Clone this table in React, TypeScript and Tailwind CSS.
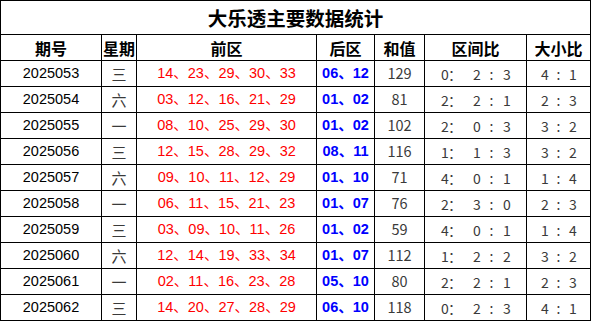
const rows = [
  { no: '2025053', day: '三', front: '14、23、29、30、33', back: '06、12', sum: '129', zone: ['0', '2', '3'], size: ['4', '1'] },
  { no: '2025054', day: '六', front: '03、12、16、21、29', back: '01、02', sum: '81', zone: ['2', '2', '1'], size: ['2', '3'] },
  { no: '2025055', day: '一', front: '08、10、25、29、30', back: '01、02', sum: '102', zone: ['2', '0', '3'], size: ['3', '2'] },
  { no: '2025056', day: '三', front: '12、15、28、29、32', back: '08、11', sum: '116', zone: ['1', '1', '3'], size: ['3', '2'] },
  { no: '2025057', day: '六', front: '09、10、11、12、29', back: '01、10', sum: '71', zone: ['4', '0', '1'], size: ['1', '4'] },
  { no: '2025058', day: '一', front: '06、11、15、21、23', back: '01、07', sum: '76', zone: ['2', '3', '0'], size: ['2', '3'] },
  { no: '2025059', day: '三', front: '03、09、10、11、26', back: '01、02', sum: '59', zone: ['4', '0', '1'], size: ['1', '4'] },
  { no: '2025060', day: '六', front: '12、14、19、33、34', back: '01、07', sum: '112', zone: ['1', '2', '2'], size: ['3', '2'] },
  { no: '2025061', day: '一', front: '02、11、16、23、28', back: '05、10', sum: '80', zone: ['2', '2', '1'], size: ['2', '3'] },
  { no: '2025062', day: '三', front: '14、20、27、28、29', back: '06、10', sum: '118', zone: ['0', '2', '3'], size: ['4', '1'] },
]

const heads = ['期号', '星期', '前区', '后区', '和值', '区间比', '大小比']

const num = "font-['Liberation_Sans','Noto_Sans_CJK_SC',sans-serif] text-[14.5px]"
const thin = "font-['Noto_Sans_CJK_SC',sans-serif] font-normal text-[#3a3a3a]"

function Ch({ c }: { c: string }) {
  return <span className="inline-block w-[7px] text-center">{c}</span>
}

function Zone({ p }: { p: string[] }) {
  return (
    <div className={`flex items-center justify-center text-[14px] ${thin}`}>
      <Ch c={p[0]} />
      <span className="inline-block w-[14px] text-left">：</span>
      <span className="ml-[11px]"><Ch c={p[1]} /></span>
      <span className="ml-[8px]"><Ch c=":" /></span>
      <span className="ml-[8px]"><Ch c={p[2]} /></span>
    </div>
  )
}

function Size({ p }: { p: string[] }) {
  return (
    <div className={`flex items-center justify-center text-[14px] ${thin}`}>
      <Ch c={p[0]} />
      <span className="ml-[7px]"><Ch c=":" /></span>
      <span className="ml-[7px]"><Ch c={p[1]} /></span>
    </div>
  )
}

export default function App() {
  return (
    <div className="w-[591px] h-[321px] bg-white overflow-hidden">
      <table className="w-[590px] table-fixed border-collapse text-black">
        <colgroup>
          <col className="w-[101px]" />
          <col className="w-[35px]" />
          <col className="w-[180px]" />
          <col className="w-[58px]" />
          <col className="w-[50px]" />
          <col className="w-[102px]" />
          <col className="w-[64px]" />
        </colgroup>
        <tbody>
          <tr className="h-[34px]">
            <td colSpan={7} className="border border-black text-center p-0 font-['Noto_Sans_CJK_SC',sans-serif] font-bold text-[19.5px] leading-none">
              大乐透主要数据统计
            </td>
          </tr>
          <tr className="h-[26px]">
            {heads.map((h) => (
              <td key={h} className="border border-black text-center p-0 font-['Noto_Sans_CJK_SC',sans-serif] font-bold text-[16px] leading-none">
                {h}
              </td>
            ))}
          </tr>
          {rows.map((r) => (
            <tr key={r.no} className="h-[26px]">
              <td className={`border border-black text-center p-0 leading-none ${num}`}>{r.no}</td>
              <td className={`border border-black text-center p-0 leading-none text-[15px] ${thin}`}>{r.day}</td>
              <td className={`border border-black text-center p-0 leading-none text-[#ff0000] ${num}`}>{r.front}</td>
              <td className={`border border-black text-center p-0 leading-none text-[#0000ff] font-bold ${num}`}>{r.back}</td>
              <td className={`border border-black text-center p-0 leading-none text-[14.5px] ${thin}`}>{r.sum}</td>
              <td className="border border-black p-0 leading-none"><Zone p={r.zone} /></td>
              <td className="border border-black p-0 leading-none"><Size p={r.size} /></td>
            </tr>
          ))}
        </tbody>
      </table>
    </div>
  )
}
